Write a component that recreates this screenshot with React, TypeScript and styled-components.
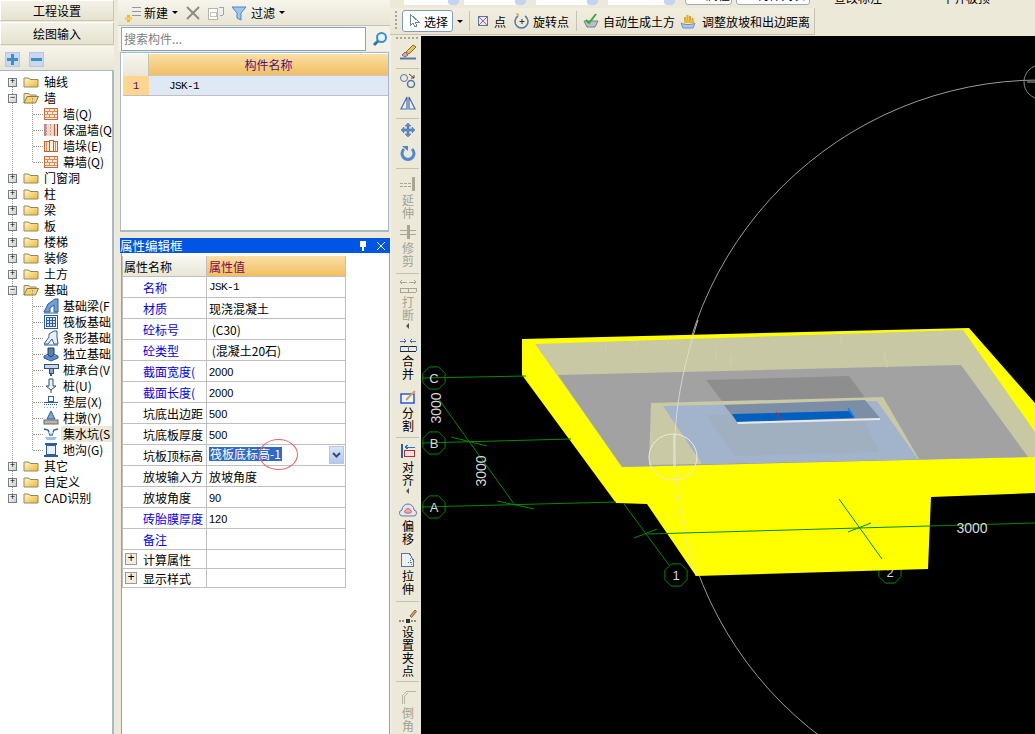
import React from "react";
import styled, { createGlobalStyle } from "styled-components";

const CJK = `"Noto Sans CJK SC", "Liberation Sans", sans-serif`;
const MONO = `"Liberation Mono", "Noto Sans CJK SC", monospace`;

const Global = createGlobalStyle`
  html, body { margin: 0; padding: 0; background: #ece9d8; overflow: hidden; }
  body { width: 1035px; height: 734px; font: 12px ${CJK}; color: #000; }
  * { box-sizing: border-box; }
`;

const Page = styled.div`display: flex; width: 1035px; height: 734px; overflow: hidden; background: #ece9d8;`;

/* Left navigation */
const Nav = styled.div`width: 114px; flex: none; display: flex; flex-direction: column; height: 734px;`;
const NavTab = styled.div<{ $h: number }>`
  height: ${p => p.$h}px; display: flex; align-items: center; justify-content: center;
  font-size: 12px; background: linear-gradient(#f4f2e8, #e6e2cf);
  border: 1px solid #c9c6b2; border-top-color: #fff; border-left-color: #fff; margin-bottom: 1px;
`;
const NavTools = styled.div`
  height: 25px; display: flex; align-items: center; gap: 9px; padding: 2px 0 0 5px;
  background: linear-gradient(#f7f5ec, #e8e5d4); border-bottom: 1px solid #a9b9cc;
`;
const SquareBtn = styled.div`
  width: 15px; height: 15px; background: #c9d7f0; border: 1px solid #b8c8e4;
  display: flex; align-items: center; justify-content: center;
`;
const TreePane = styled.div`
  flex: 1; background: #fff; border-right: 2px solid #a9b9cc; padding-top: 3px; overflow: hidden; width: 114px;
`;
const TreeList = styled.div`
  position: relative;
  &::before { content: ""; position: absolute; left: 12px; top: 8px; bottom: 8px; border-left: 1px dotted #9a9a8c; }
`;
const TreeRow = styled.div`
  position: relative; height: 16px; display: flex; align-items: center; padding-left: 8px; white-space: nowrap;
`;
const Expander = styled.span`
  width: 9px; height: 9px; flex: none; position: relative; z-index: 1; border: 1px solid #6f7f8f;
  background: linear-gradient(135deg, #fff, #cfcdbd);
  display: flex; align-items: center; justify-content: center; font: 9px/7px "Liberation Mono", monospace; color: #000;
`;
const FolderSlot = styled.span`width: 16px; height: 16px; margin-left: 6px; flex: none; display: flex;`;
const Label = styled.span`margin-left: 5px; font-size: 12px; line-height: 16px;`;
const Children = styled.div`
  position: relative;
  &::before { content: ""; position: absolute; left: 32px; top: -8px; bottom: 8px; border-left: 1px dotted #9a9a8c; }
`;
const ChildRow = styled.div`
  position: relative; height: 16px; display: flex; align-items: center; padding-left: 43px; white-space: nowrap;
  &::before { content: ""; position: absolute; left: 33px; top: 8px; width: 10px; border-top: 1px dotted #9a9a8c; }
`;
const ChildLabel = styled.span<{ $sel?: boolean }>`
  margin-left: 2px; padding-left: 2px; flex: 1; font-size: 12px; line-height: 16px;
  background: ${p => (p.$sel ? "#ece9d8" : "transparent")};
`;

/* Middle */
const Splitter = styled.div`width: 4px; flex: none;`;
const Mid = styled.div`width: 272px; flex: none; display: flex; flex-direction: column; height: 734px;`;
const MidBar = styled.div`
  height: 26px; display: flex; align-items: center; padding-left: 6px;
  background: linear-gradient(#f7f5ec, #e8e5d4); border-bottom: 1px solid #c5c2ae; font-size: 12px;
`;
const BarText = styled.span<{ $l?: number }>`margin-left: ${p => p.$l ?? 0}px; white-space: nowrap;`;
const Caret = styled.span<{ $l?: number }>`
  display: inline-block; margin-left: ${p => p.$l ?? 4}px; width: 0; height: 0;
  border-left: 3px solid transparent; border-right: 3px solid transparent; border-top: 3px solid #000;
`;
const IconSlot = styled.span<{ $l?: number }>`display: inline-flex; margin-left: ${p => p.$l ?? 0}px; flex: none;`;
const SearchRow = styled.div`height: 25px; display: flex; align-items: center; padding: 0 2px 0 3px; background: #f4f2e8;`;
const SearchInput = styled.div`
  width: 245px; height: 24px; background: #fff; border: 1px solid #8aa3bf; display: flex; align-items: center;
  padding-left: 2px; color: #808080; font-size: 12px;
`;
const GridBox = styled.div`
  margin: 1px 1px 0 2px; height: 180px; background: #fff; border: 1px solid #a9b9cc; border-bottom-width: 2px; padding: 1px 0 0 2px;
`;
const GridHead = styled.div`display: flex; height: 22px;`;
const Corner = styled.div`width: 26px; background: linear-gradient(#f7f6f0, #e9e6d6); border-right: 1px solid #c5c2ae;`;
const HeadCell = styled.div`
  width: 240px; background: linear-gradient(#fadfa6, #f2bf62); color: #54107a; display: flex; align-items: center; justify-content: center;
  border-bottom: 1px solid #c8c8c8; font-size: 12px;
`;
const GridRow = styled.div`display: flex; height: 20px; border-bottom: 1px solid #bfbfbf;`;
const RowNum = styled.div`width: 26px; background: #ffd58f; color: #54107a; display: flex; align-items: center; justify-content: center; font: 11px ${MONO};`;
const RowName = styled.div`width: 240px; background: #dfe8f5; padding-left: 20px; display: flex; align-items: center; font: 11px ${MONO}; letter-spacing: -0.6px;`;
const TitleBar = styled.div`
  margin: 6px 0 0 2px; height: 15px; background: #0055e5; color: #fff; display: flex; align-items: center;
  padding-left: 0; font-size: 12.5px; line-height: 15px;
`;
const TitleText = styled.span`flex: 1;`;
const PropPane = styled.div`
  flex: 1; margin-left: 3px; background: #fff; border-left: 1px solid #8aa3bf; border-right: 1px solid #8aa3bf; padding: 3px 0 0 0;
`;
const PropTable = styled.div`width: 224px; border-right: 1px solid #bfbfbf; border-left: 1px solid #bfbfbf;`;
const PropRow = styled.div<{ $h: number }>`
  display: flex; height: ${p => p.$h}px; border-bottom: 1px solid #bfbfbf; position: relative;
`;
const NameHead = styled.div`
  width: 84px; border-right: 1px solid #bfbfbf; background: linear-gradient(#f9f8f2, #e9e6d6);
  padding-left: 1px; display: flex; align-items: center;
`;
const ValueHead = styled.div`
  flex: 1; background: linear-gradient(#fadfa6, #f2bf62); color: #7a0a50; padding-left: 2px; display: flex; align-items: center;
`;
const NameCell = styled.div<{ $blue?: boolean }>`
  width: 84px; flex: none; border-right: 1px solid #bfbfbf; padding-left: 20px; white-space: nowrap;
  display: flex; align-items: center; color: ${p => (p.$blue ? "#0000f0" : "#000")};
`;
const ValueCell = styled.div<{ $mono?: boolean }>`
  flex: 1; padding-left: 2px; display: flex; align-items: center; white-space: pre; font-family: ${p => (p.$mono ? MONO : CJK)};
  ${p => (p.$mono ? "font-size: 11px; letter-spacing: -0.6px;" : "font-size: 12px;")}
`;
const NumValue = styled.span`font: 11px "Liberation Sans", sans-serif; padding-top: 2px;`;
const PlusBox = styled.span`
  position: absolute; left: 2px; top: 3px; width: 12px; height: 12px; border: 1px solid #999; background: #f0eee2;
  display: flex; align-items: center; justify-content: center; font: 12px/10px "Liberation Mono", monospace;
`;
const Selected = styled.span`background: #316ac5; color: #fff; font-size: 12px; line-height: 14px; padding: 0 1px; margin-top: -3px;`;
const DropBtn = styled.span`
  position: absolute; right: 1px; top: 1px; width: 15px; height: 18px; background: linear-gradient(#d9e5f8, #b2c8ee);
  border: 1px solid #b8c8e4; display: flex; align-items: center; justify-content: center;
`;
const RedRing = styled.span`
  position: absolute; left: 136px; top: -6px; width: 39px; height: 31px; border: 1px solid #f06060; border-radius: 50%; pointer-events: none;
`;

/* Right */
const Right = styled.div`flex: 1; display: flex; flex-direction: column; min-width: 0; height: 734px;`;
const ClipStrip = styled.div`height: 7px; overflow: hidden; background: #ece9d8;`;
const ClipInner = styled.div`display: flex; align-items: flex-end; height: 22px; margin-top: -17px; padding-left: 14px; font-size: 12px; line-height: 14px; white-space: nowrap;`;
const FieldBox = styled.div<{ $w: number; $r: number }>`
  width: ${p => p.$w}px; height: 19px; margin-right: ${p => p.$r}px; background: #fff; display: flex; justify-content: flex-end; flex: none;
`;
const FieldDrop = styled.div`width: 11px; background: #c5d5f0; height: 100%; border-radius: 0 0 3px 3px;`;
const ClipBtn = styled.div<{ $w: number }>`
  width: ${p => p.$w}px; height: 20px; flex: none; margin-right: 4px; background: #fff; border: 1px solid #9aa9c0; border-radius: 3px;
  display: flex; align-items: center; padding-left: 20px;
`;
const ClipText = styled.span<{ $l: number }>`margin-left: ${p => p.$l}px; flex: none;`;
const TopBar = styled.div`height: 29px; display: flex; align-items: center; background: #ece9d8; font-size: 12px;`;
const BarBody = styled.div`
  width: 425px; height: 27px; display: flex; align-items: center; padding-left: 5px; background: linear-gradient(#f1eee0, #e8e5d4);
  border-right: 1px solid #c5c2ae; border-bottom: 1px solid #c5c2ae;
`;
const GripV = styled.span`width: 2px; height: 20px; flex: none; background: repeating-linear-gradient(#a8a694 0 2px, transparent 2px 4px);`;
const SelectBtn = styled.div`
  width: 51px; height: 22px; margin-left: 5px; background: #fff; border: 1px solid #7f9db9; border-radius: 3px;
  display: flex; align-items: center; padding-left: 5px; gap: 4px; flex: none;
`;
const ToolSep = styled.span<{ $l: number }>`width: 1px; height: 20px; margin-left: ${p => p.$l}px; background: #c5c2ae; flex: none;`;
const Below = styled.div`flex: 1; display: flex; min-height: 0;`;
const VBar = styled.div`
  width: 31px; flex: none; display: flex; flex-direction: column; padding-left: 5px; overflow: hidden;
  background: #ece9d8; border-left: 1px solid #f4f2e8;
`;
const VGrip = styled.div`height: 8px; width: 22px; flex: none; padding-top: 1px; &::before { content: ""; display: block; height: 2px; background: repeating-linear-gradient(90deg, #a8a694 0 2px, transparent 2px 4px); }`;
const VSep = styled.div<{ $t: number }>`width: 23px; height: 1px; flex: none; margin-top: ${p => p.$t}px; background: #c5c2ae;`;
const VTool = styled.div<{ $t: number }>`
  width: 23px; flex: none; margin-top: ${p => p.$t}px; display: flex; flex-direction: column; align-items: center;
`;
const VIcon = styled.span`height: 16px; width: 18px; display: block;`;
const VLabel = styled.span<{ $off?: boolean }>`
  margin-top: 2px; writing-mode: vertical-rl; text-orientation: upright; font-size: 12px; line-height: 14px; letter-spacing: 1px;
  color: ${p => (p.$off ? "#a3a294" : "#000")};
`;
const VCaret = styled.span`width: 0; height: 0; margin-top: 1px; border-top: 3px solid transparent; border-bottom: 3px solid transparent; border-right: 3px solid #555;`;
const CanvasWrap = styled.div`flex: 1; background: #000; min-width: 0; overflow: hidden;`;
const CanvasSvg = styled.svg`display: block;`;

/* Icons */
const S = ({ children, w = 16, h = 16 }: { children: React.ReactNode; w?: number; h?: number }) => (
  <svg width={w} height={h} viewBox={`0 0 ${w} ${h}`} shapeRendering="crispEdges">{children}</svg>
);
const Sm = ({ children, w = 16, h = 16 }: { children: React.ReactNode; w?: number; h?: number }) => (
  <svg width={w} height={h} viewBox={`0 0 ${w} ${h}`}>{children}</svg>
);
const FolderClosed = () => (
  <Sm>
    <defs><linearGradient id="fc" x1="0" y1="0" x2="1" y2="1"><stop offset="0" stopColor="#fff6c8" /><stop offset="1" stopColor="#f0b830" /></linearGradient></defs>
    <path d="M1 13V4h5l1 1.500h8V13z" fill="url(#fc)" stroke="#8c8a70" />
  </Sm>
);
const FolderOpen = () => (
  <Sm>
    <path d="M1 13V3.500h5l1 1.500h6v2" fill="#f6e6a8" stroke="#8c8a70" />
    <path d="M1 13l3-6.500h11.500L12.500 13z" fill="#f7d26e" stroke="#8c7a40" />
  </Sm>
);
const Brick = () => (
  <S>
    <rect x="1.500" y="2.500" width="13" height="11" fill="#fdebd6" stroke="#d06a3c" />
    <path d="M2 5.500h12M2 8.500h12M2 11.500h12M6.500 3v2M11.500 3v2M4.500 6v2M9.500 6v2M6.500 9v2M11.500 9v2" stroke="#e28a5c" fill="none" />
  </S>
);
const Insul = () => (
  <S>
    <rect x="1" y="2" width="14" height="12" fill="#f0d6cc" />
    <path d="M3 2v12M7 2v12" stroke="#c89a90" strokeDasharray="2 1" />
    <rect x="11" y="2" width="1" height="12" fill="#c05a28" /><rect x="14" y="2" width="1" height="12" fill="#8c3a18" />
    <rect x="1" y="2" width="2" height="12" fill="#b88a88" />
  </S>
);
const Pier = () => (
  <S>
    <rect x="1.500" y="3.500" width="13" height="10" fill="#fdebd6" stroke="#c8602c" />
    <path d="M6 2.500h4v11H6z" fill="#fff3e2" stroke="#c8602c" /><path d="M3.500 4v9M12.500 4v9" stroke="#e28a5c" />
  </S>
);
const B = "#2f5d9f";
const BeamF = () => (<Sm><path d="M1 14l4-8 7-5h3v13h-4V7L7 10v4z" fill="#6f9fd6" stroke={B} /><path d="M1 15h14" stroke={B} /></Sm>);
const Raft = () => (<S><rect x="1.500" y="1.500" width="13" height="13" fill="#fff" stroke={B} /><rect x="3.500" y="3.500" width="9" height="9" fill="#cfe0f4" stroke={B} /><path d="M6.500 3v10M9.500 3v10M3 6.500h10M3 9.500h10" stroke={B} /></S>);
const Strip = () => (<Sm><path d="M1 14l5-7V4l5-3h3v6l1 7h-4l-2-5-4 5z" fill="#e8f0fa" stroke={B} /><path d="M1 15h14" stroke={B} /></Sm>);
const Indep = () => (<Sm><path d="M1 10l7-3 7 3-7 4z" fill="#8fb4e2" stroke={B} /><path d="M1 10v2l7 3 7-3v-2" fill="#5c8cc8" stroke={B} /><path d="M5 2h6v7l-3 2-3-2z" fill="#5c7fa8" stroke="#1f3d68" /></Sm>);
const Cap = () => (<S><rect x="1" y="2" width="14" height="4" fill="#c8d6e8" stroke="#304f78" /><rect x="6" y="6" width="4" height="5" fill="#8fa8c8" stroke="#304f78" /><path d="M7 11h2v3H7z" fill="#304f78" /></S>);
const Pile = () => (<Sm><path d="M6 1h4v7h3l-5 4-5-4h3z" fill="#e8f0fa" stroke="#304f78" /><path d="M8 12v3" stroke="#304f78" /></Sm>);
const Pad = () => (<S><path d="M5.500 2.500h5v5h-5z" fill="#fff" stroke={B} /><path d="M1 8.500h14" stroke={B} /><path d="M1 10.500h14" stroke={B} strokeDasharray="1 1" /><path d="M1 13h14" stroke="#8fa8c8" strokeDasharray="1 2" /></S>);
const Pedestal = () => (<Sm><path d="M8 1l4 8H4z" fill="#7fa4d8" stroke={B} /><rect x="1" y="10" width="14" height="4" fill="#b8b6a8" stroke="#6c6a5c" /></Sm>);
const Sump = () => (<Sm><path d="M1 3l4 1 2 5h2l2-5 4-1" fill="none" stroke={B} strokeWidth="1.400" /><path d="M2 11h12l-2 3H4z" fill="#9fc0e8" /><path d="M5 6l3 3 3-3z" fill="#cfe0f4" /></Sm>);
const Trench = () => (<S><rect x="2" y="1" width="12" height="2" fill={B} /><rect x="3.500" y="3.500" width="9" height="9" fill="#e8f0fa" stroke={B} /><rect x="1" y="13" width="14" height="2" fill={B} /></S>);

const NewIcon = () => (<S w={18} h={18}><path d="M8 3h9M8 7h9M8 11h9" stroke="#8c98a8" /><rect x="3" y="11" width="3" height="7" fill="#e8b820" /><rect x="1" y="13" width="7" height="3" fill="#f2d050" /></S>);
const CloseIcon = () => (<Sm w={16} h={16}><path d="M2 2l12 12M14 2L2 14" stroke="#8c8c88" strokeWidth="2" /></Sm>);
const CopyIcon = () => (<S w={18} h={16}><rect x="1.500" y="3.500" width="9" height="11" fill="#fff" stroke="#b4b4ac" /><rect x="3" y="7" width="6" height="4" fill="none" stroke="#c4c4bc" /><path d="M12 2h4M16 2v8M16 10h-3" stroke="#8aa8d0" fill="none" /></S>);
const Funnel = () => (<Sm><path d="M1 2h14L10 8v7l-4-2V8z" fill="#9fc6ea" stroke="#4c88c0" /></Sm>);
const Lens = () => (<Sm w={16} h={16}><circle cx="9.500" cy="6.500" r="4.500" fill="#e8f4fc" stroke="#3c90d0" strokeWidth="2" /><path d="M6 10l-4 4" stroke="#2878b8" strokeWidth="3" /></Sm>);
const Pin = () => (<S w={10} h={10}><path d="M2 0h6v6H6v4H4V6H2z" fill="#fff" /></S>);
const XS = () => (<Sm w={10} h={10}><path d="M1 1l8 8M9 1L1 9" stroke="#fff" /></Sm>);
const Arrow = () => (<Sm w={9} h={7}><path d="M1 1l3.500 3.500L8 1" stroke="#2f4f7f" strokeWidth="2" fill="none" /></Sm>);
const Plus = () => (<S w={11} h={11}><path d="M0 4h11v3H0zM4 0h3v11H4z" fill="#3f8fc8" /></S>);
const Minus = () => (<S w={11} h={11}><path d="M0 4h11v3H0z" fill="#3f8fc8" /></S>);

const Cursor = () => (<S w={12} h={16}><path d="M2 1v12l3-3 2 4 2-1-2-4h4z" fill="#fff" stroke="#6f88a8" /></S>);
const PointIco = () => (<S w={12} h={12}><rect x="1.500" y="1.500" width="9" height="9" fill="#e6ebf5" stroke="#5c78a8" /><path d="M2 2l8 8M10 2l-8 8" stroke="#b06070" /></S>);
const RotIco = () => (<Sm w={16} h={16}><path d="M4 3a6.500 6.500 0 1 0 7 0" fill="none" stroke="#5078a8" strokeWidth="1.500" /><path d="M2 0l3 1-1 3z" fill="#e0a020" /><path d="M8 6v5M5.500 8.500h5" stroke="#333" /></Sm>);
const AutoIco = () => (<Sm><path d="M1 8h14l-3 6H4z" fill="#b8c0c8" stroke="#70808c" /><path d="M3 7l3 3 7-9" fill="none" stroke="#38a838" strokeWidth="2" /></Sm>);
const HandIco = () => (<Sm><path d="M5 9V4M7.500 9V2M10 9V3M12.500 9V5" stroke="#e0a820" strokeWidth="2" /><path d="M4 7h10v3H4z" fill="#e8b830" /><path d="M1 10c3 2 11 2 14 0l-2 5H3z" fill="#a8c8ec" stroke="#6c90c0" /></Sm>);

const V = {
  brush: <Sm w={18} h={16}><path d="M14 1l3 2-7 7-3-2z" fill="#e8c060" stroke="#8c6a30" /><path d="M6 8l3 3-3 2-3-2z" fill="#e0a0b0" stroke="#a06070" /><path d="M1 14.500h16" stroke="#5078a8" strokeWidth="2" /></Sm>,
  circles: <Sm w={18} h={16}><circle cx="5" cy="6" r="3.500" fill="none" stroke="#5078a8" /><circle cx="12" cy="12" r="3.500" fill="none" stroke="#5078a8" strokeWidth="1.500" /><path d="M10 2l5 4M15 6l-3 0M15 6l0-3" stroke="#444" fill="none" /></Sm>,
  mirror: <Sm w={18} h={16}><path d="M8 2L2 14h6zM10 2l6 12h-6z" fill="#eaf0fa" stroke="#4a6fb0" strokeWidth="1.200" /></Sm>,
  move: <Sm w={18} h={16}><path d="M9 1l3 3h-2v3h3V5l3 3-3 3V9h-3v3h2l-3 3-3-3h2V9H5v2L2 8l3-3v2h3V4H6z" fill="#5f8cc8" stroke="#3c6aa0" strokeWidth="0.500" /></Sm>,
  rotate: <Sm w={18} h={16}><path d="M5 4a6 6 0 1 0 8 0" fill="none" stroke="#4f86d0" strokeWidth="3" /><path d="M3 1h6v5z" fill="#4f86d0" /></Sm>,
  extend: <S w={18} h={16}><path d="M14.500 1v14" stroke="#a8a694" strokeWidth="3" /><path d="M1 7h11M1 10h11" stroke="#a8a694" strokeDasharray="3 1" /></S>,
  trim: <S w={18} h={16}><path d="M9 1v14" stroke="#a8a694" strokeWidth="3" /><path d="M1 6h16M1 10h16" stroke="#a8a694" /></S>,
  split: <S w={18} h={16}><path d="M1 4h7M10 4h7M1 10h16M1 14h16M1 10v4M9 10v4M17 10v4" stroke="#a8a694" fill="none" /><path d="M3 2L1 4l2 2M15 2l2 2-2 2" stroke="#a8a694" fill="none" /></S>,
  merge: <S w={18} h={16}><path d="M1 4h6M11 4h6" stroke="#3f6fc0" /><path d="M5 2l2 2-2 2M13 2l-2 2 2 2" stroke="#3f6fc0" fill="none" /><path d="M1 9h16M1 14h16" stroke="#222" /><path d="M1 9v5M9 9v5M17 9v5" stroke="#3f6fc0" /></S>,
  cut: <Sm w={18} h={16}><rect x="2" y="5" width="13" height="9" fill="#eaf4fc" stroke="#2f55e0" strokeWidth="1.500" /><path d="M7 11l9-9" stroke="#d8a050" strokeWidth="2" /></Sm>,
  align: <S w={18} h={16}><rect x="2" y="1" width="2" height="14" fill="#2f5d9f" /><rect x="5.500" y="7.500" width="10" height="6" fill="#f0e0e0" stroke="#b03030" /><path d="M6 4h10M6 4l3-2M6 4l3 2" stroke="#3070c0" fill="none" /></S>,
  offset: <Sm w={18} h={16}><path d="M4 14a3 3 0 0 1-1-6 6 6 0 0 1 12 0 3 3 0 0 1-1 6z" fill="#e4e4ee" stroke="#6078a8" /><path d="M6.500 11a2 2 0 0 1 0-3 3 3 0 0 1 5 0 2 2 0 0 1 0 3z" fill="#f0a8a8" stroke="#c06060" /></Sm>,
  stretch: <S w={18} h={16}><path d="M2.500 1.500h8l4 7v6h-12z" fill="#eef2f8" stroke="#5078a8" /><path d="M11 6l2 7M9 10h3" stroke="#5078a8" strokeDasharray="1 1" /></S>,
  grip: <Sm w={18} h={16}><path d="M11 8l5-6 1.500 1.500-5 6z" fill="#e0a060" stroke="#806040" /><path d="M0 13h6M12 13h6" stroke="#333" strokeDasharray="2 1" /><rect x="7" y="11" width="4" height="4" fill="#333" /></Sm>,
  chamfer: <S w={18} h={16}><path d="M3 15V7L8 2h9M5 15V8l4-4" stroke="#b8b6a8" fill="none" /></S>,
};

type TreeItem = { icon: React.ReactNode; text: string; sel?: boolean };
const wallKids: TreeItem[] = [
  { icon: <Brick />, text: "墙(Q)" }, { icon: <Insul />, text: "保温墙(Q" }, { icon: <Pier />, text: "墙垛(E)" }, { icon: <Brick />, text: "幕墙(Q)" },
];
const baseKids: TreeItem[] = [
  { icon: <BeamF />, text: "基础梁(F" }, { icon: <Raft />, text: "筏板基础" }, { icon: <Strip />, text: "条形基础" }, { icon: <Indep />, text: "独立基础" },
  { icon: <Cap />, text: "桩承台(V" }, { icon: <Pile />, text: "桩(U)" }, { icon: <Pad />, text: "垫层(X)" }, { icon: <Pedestal />, text: "柱墩(Y)" },
  { icon: <Sump />, text: "集水坑(S", sel: true }, { icon: <Trench />, text: "地沟(G)" },
];

const Node = ({ text, open, kids }: { text: string; open?: boolean; kids?: TreeItem[] }) => (
  <>
    <TreeRow>
      <Expander>{open ? "−" : "+"}</Expander>
      <FolderSlot>{open ? <FolderOpen /> : <FolderClosed />}</FolderSlot>
      <Label>{text}</Label>
    </TreeRow>
    {kids && (
      <Children>
        {kids.map(k => (
          <ChildRow key={k.text}>
            {k.icon}
            <ChildLabel $sel={k.sel}>{k.text}</ChildLabel>
          </ChildRow>
        ))}
      </Children>
    )}
  </>
);

const props: { n: string; v?: string; blue?: boolean; mono?: boolean; num?: boolean }[] = [
  { n: "名称", v: "JSK-1", blue: true, mono: true },
  { n: "材质", v: "现浇混凝土", blue: true },
  { n: "砼标号", v: " (C30)", blue: true },
  { n: "砼类型", v: " (混凝土20石)", blue: true },
  { n: "截面宽度(", v: "2000", blue: true, num: true },
  { n: "截面长度(", v: "2000", blue: true, num: true },
  { n: "坑底出边距", v: "500", num: true },
  { n: "坑底板厚度", v: "500", num: true },
];
const props2: { n: string; v?: string; blue?: boolean; num?: boolean }[] = [
  { n: "放坡输入方", v: "放坡角度" },
  { n: "放坡角度", v: "90", num: true },
  { n: "砖胎膜厚度", v: "120", blue: true, num: true },
  { n: "备注", blue: true },
];

const vTools: ({ sep: number } | { t: number; icon: React.ReactNode; label?: string; off?: boolean; caret?: boolean })[] = [
  { t: 0, icon: V.brush }, { sep: 8 }, { t: 3, icon: V.circles }, { t: 7, icon: V.mirror }, { sep: 7 },
  { t: 3, icon: V.move }, { t: 7, icon: V.rotate }, { sep: 7 },
  { t: 7, icon: V.extend, label: "延伸", off: true }, { t: 4, icon: V.trim, label: "修剪", off: true }, { sep: 5 },
  { t: 4, icon: V.split, label: "打断", off: true, caret: true }, { t: 8, icon: V.merge, label: "合并" },
  { t: 8, icon: V.cut, label: "分割" }, { sep: 4 }, { t: 5, icon: V.align, label: "对齐", caret: true },
  { t: 8, icon: V.offset, label: "偏移" }, { t: 6, icon: V.stretch, label: "拉伸" }, { sep: 5 },
  { t: 6, icon: V.grip, label: "设置夹点" }, { sep: 3 }, { t: 7, icon: V.chamfer, label: "倒角", off: true },
];

const GREEN = "#008a00";
const Axis = ({ cx, cy, t }: { cx: number; cy: number; t: string }) => {
  const r = 12;
  const pts = Array.from({ length: 8 }, (_, i) => {
    const a = Math.PI / 8 + (i * Math.PI) / 4;
    return `${cx + r * Math.cos(a)},${cy + r * Math.sin(a)}`;
  }).join(" ");
  return (
    <g>
      <polygon points={pts} fill="none" stroke={GREEN} />
      <text x={cx} y={cy + 5} textAnchor="middle" fill="#d8d8d8" fontSize="13" fontFamily="Liberation Sans, sans-serif">{t}</text>
    </g>
  );
};

const Canvas = () => (
  <CanvasSvg width={614} height={698} viewBox="421 36 614 698">
    <circle cx={1040} cy={445} r={365} fill="none" stroke="#9a9a9a" />
    <circle cx={1041} cy={82} r={17} fill="none" stroke="#8a8a8a" />
    <path d="M1027 82h14" stroke="#aaa" />
    <Axis cx={890} cy={572} t="2" />
    <polygon points="522,339 969,328 1035,403 1035,493 931,497 928,569 696,576 647,504 616,503 522,375" fill="#ffff00" />
    <polygon points="535,344 963,330 1035,432 1035,457 622,467" fill="#c8c8a4" />
    <polygon points="558,375 961,365 1028,457 622,467" fill="#a2a2a2" />
    <polygon points="706,380 849,376 880,418 738,422" fill="#8e8e8e" />
    <polygon points="651,403 883,397 919,459 649,465" fill="#c9c9a5" />
    <polygon points="663,406 877,401 918,459 702,464" fill="#a2b4cc" />
    <polygon points="706,415 860,412 879,452 734,456" fill="#a0b0c0" />
    <polygon points="724,405 865,400 880,418 737,422" fill="#7b8ea6" />
    <polygon points="732,414 849,411 854,418 737,422" fill="#0060c0" />
    <polygon points="737,422 880,418 880,420 738,424" fill="#e8e8e8" />
    <path d="M776 412l5 7" stroke="#e02020" />
    <path d="M848 408l6 9" stroke="#1080f0" strokeWidth="1.500" />
    <g stroke="#d8d8b8" fill="none" opacity="0.8">
      <path d="M606 341v10M637 338v9M668 336v9M716 350v10M731 356v9M841 336v9M885 352v10M887 360v8" strokeWidth="0.600" />
    </g>
    <path d="M698 320C682 370 675 410 675 445C675 490 682 530 696 576" fill="none" stroke="#e4e4d0" opacity="0.8" />
    <ellipse cx={673} cy={457} rx={24} ry={23} fill="none" stroke="#ecece0" />
    <path d="M674 434v34" stroke="#ecece0" />
    <g stroke={GREEN} fill="none">
      <path d="M422 378l104-2M422 443l149-4M422 507l194-5M648 534l387-11" />
      <path d="M451 437l36 9M497 501l37 8M634 538l23-9M848 532l23-9M839 499l43 60M438 398l76 106M624 504l45 61" />
    </g>
    <Axis cx={434} cy={378} t="C" />
    <Axis cx={434} cy={443} t="B" />
    <Axis cx={434} cy={507} t="A" />
    <Axis cx={676} cy={575} t="1" />
    <g fill="#d8d8d8" fontSize="14" fontFamily="Liberation Sans, sans-serif" textAnchor="middle">
      <text transform="translate(441,408) rotate(-90)">3000</text>
      <text transform="translate(486,471) rotate(-90)">3000</text>
      <text x={972} y={533}>3000</text>
    </g>
  </CanvasSvg>
);

export default function App() {
  return (
    <Page>
      <Global />
      <Nav>
        <NavTab $h={21}>工程设置</NavTab>
        <NavTab $h={23}>绘图输入</NavTab>
        <NavTools>
          <SquareBtn><Plus /></SquareBtn>
          <SquareBtn><Minus /></SquareBtn>
        </NavTools>
        <TreePane>
          <TreeList>
            <Node text="轴线" />
            <Node text="墙" open kids={wallKids} />
            {["门窗洞", "柱", "梁", "板", "楼梯", "装修", "土方"].map(t => <Node key={t} text={t} />)}
            <Node text="基础" open kids={baseKids} />
            {["其它", "自定义", "CAD识别"].map(t => <Node key={t} text={t} />)}
          </TreeList>
        </TreePane>
      </Nav>
      <Splitter />
      <Mid>
        <MidBar>
          <NewIcon />
          <BarText $l={2}>新建</BarText>
          <Caret />
          <IconSlot $l={7}><CloseIcon /></IconSlot>
          <IconSlot $l={6}><CopyIcon /></IconSlot>
          <IconSlot $l={6}><Funnel /></IconSlot>
          <BarText $l={4}>过滤</BarText>
          <Caret />
        </MidBar>
        <SearchRow>
          <SearchInput>搜索构件...</SearchInput>
          <IconSlot $l={6}><Lens /></IconSlot>
        </SearchRow>
        <GridBox>
          <GridHead><Corner /><HeadCell>构件名称</HeadCell></GridHead>
          <GridRow><RowNum>1</RowNum><RowName>JSK-1</RowName></GridRow>
        </GridBox>
        <TitleBar>
          <TitleText>属性编辑框</TitleText>
          <IconSlot><Pin /></IconSlot>
          <IconSlot $l={8}><XS /></IconSlot>
          <IconSlot $l={4} />
        </TitleBar>
        <PropPane>
          <PropTable>
            <PropRow $h={21}><NameHead>属性名称</NameHead><ValueHead>属性值</ValueHead></PropRow>
            {props.map(p => (
              <PropRow $h={21} key={p.n}>
                <NameCell $blue={p.blue}>{p.n}</NameCell>
                <ValueCell $mono={p.mono}>{p.num ? <NumValue>{p.v}</NumValue> : p.v}</ValueCell>
              </PropRow>
            ))}
            <PropRow $h={21}>
              <NameCell>坑板顶标高</NameCell>
              <ValueCell><Selected>筏板底标高-1</Selected></ValueCell>
              <DropBtn><Arrow /></DropBtn>
              <RedRing />
            </PropRow>
            {props2.map(p => (
              <PropRow $h={21} key={p.n}>
                <NameCell $blue={p.blue}>{p.n}</NameCell>
                <ValueCell>{p.num ? <NumValue>{p.v}</NumValue> : p.v}</ValueCell>
              </PropRow>
            ))}
            {["计算属性", "显示样式"].map(t => (
              <PropRow $h={19} key={t}>
                <PlusBox>+</PlusBox>
                <NameCell>{t}</NameCell>
                <ValueCell />
              </PropRow>
            ))}
          </PropTable>
        </PropPane>
      </Mid>
      <Right>
        <ClipStrip>
          <ClipInner>
            <FieldBox $w={55} $r={5}><FieldDrop /></FieldBox>
            <FieldBox $w={62} $r={10}><FieldDrop /></FieldBox>
            <FieldBox $w={62} $r={10}><FieldDrop /></FieldBox>
            <FieldBox $w={67} $r={10}><FieldDrop /></FieldBox>
            <ClipBtn $w={47}>属性</ClipBtn>
            <ClipBtn $w={74}>构件列表</ClipBtn>
            <ClipText $l={20}>查改标注</ClipText>
            <ClipText $l={60}>平齐板顶</ClipText>
          </ClipInner>
        </ClipStrip>
        <TopBar>
          <BarBody>
            <GripV />
            <SelectBtn><Cursor />选择</SelectBtn>
            <Caret $l={4} />
            <ToolSep $l={6} />
            <IconSlot $l={7}><PointIco /></IconSlot>
            <BarText $l={5}>点</BarText>
            <IconSlot $l={8}><RotIco /></IconSlot>
            <BarText $l={3}>旋转点</BarText>
            <ToolSep $l={7} />
            <IconSlot $l={6}><AutoIco /></IconSlot>
            <BarText $l={4}>自动生成土方</BarText>
            <IconSlot $l={5}><HandIco /></IconSlot>
            <BarText $l={6}>调整放坡和出边距离</BarText>
          </BarBody>
        </TopBar>
        <Below>
          <VBar>
            <VGrip />
            {vTools.map((it, i) =>
              "sep" in it ? (
                <VSep key={i} $t={it.sep} />
              ) : (
                <VTool key={i} $t={it.t}>
                  <VIcon>{it.icon}</VIcon>
                  {it.label && <VLabel $off={it.off}>{it.label}</VLabel>}
                  {it.caret && <VCaret />}
                </VTool>
              )
            )}
          </VBar>
          <CanvasWrap><Canvas /></CanvasWrap>
        </Below>
      </Right>
    </Page>
  );
}
